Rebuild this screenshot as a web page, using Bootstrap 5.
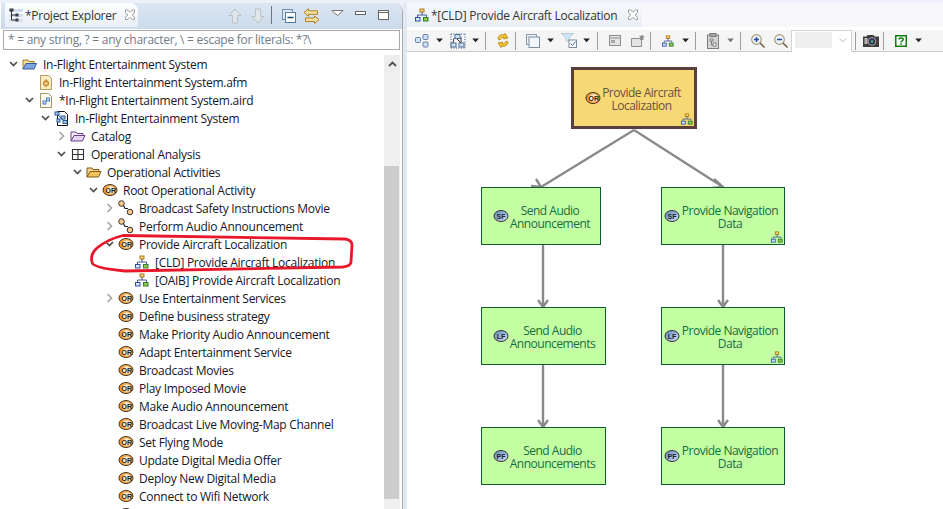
<!doctype html>
<html lang="en">
<head>
<meta charset="utf-8">
<title>Provide Aircraft Localization</title>
<link href="https://cdn.jsdelivr.net/npm/bootstrap@5.3.0/dist/css/bootstrap.min.css" rel="stylesheet">
<style>
html,body{height:509px;overflow:hidden;background:#eef0fa}
body{font-family:"Open Sans","Noto Sans",sans-serif;font-size:12px;line-height:18px;color:#16161f;letter-spacing:-.27px}
.flex-none{flex:none}
.ide-root{width:943px;height:509px;padding-top:3px}
.left-pane{width:403px;height:506px;padding-left:1px;background:#fff;border-right:1px solid #a9a9a9;border-top-right-radius:9px}
.left-head{height:26px;padding-left:4px;background:linear-gradient(#dbe6f2,#cbdaea);border-top-right-radius:9px}
.view-tab{width:133px;height:24px;padding-left:4px;background:linear-gradient(#fff,#e8eef6);border-top-right-radius:8px;color:#333}
.view-ico{margin-right:2px}
.view-tab .tab-x{margin-left:8px}
.view-tab span,.editor-tab span,.tree-row span:not(.tw){padding-top:2px}
.head-actions{padding:5px 13px 0 0}
.head-actions svg{display:block}
.g6{margin-left:6px}.g7{margin-left:7px}.g9{margin-left:9px}.g10{margin-left:10px}.g11{margin-left:11px}.g12{margin-left:12px}
.up2{margin-top:-2px}.dn1{margin-top:1px}.dn2{margin-top:2px}.dn3{margin-top:3px}
.filter-box{height:20px;margin:1px 2px 0 2px;border:1px solid #a8a8a8;background:#fff;color:#6f7c88;padding-left:4px;line-height:17px;white-space:nowrap}
.tree-zone{height:454px;margin-top:5px;overflow:hidden}
.tree-list{flex:1;overflow:hidden;margin:0;list-style:none}
.tree-row{height:18px;white-space:nowrap}
.tw{width:17px;height:18px;flex:none}
.tico{width:16px;height:18px;flex:none;margin-right:5px}
.lv0{padding-left:4px}.lv1{padding-left:20px}.lv2{padding-left:36px}.lv3{padding-left:52px}
.lv4{padding-left:68px}.lv5{padding-left:84px}.lv6{padding-left:100px}.lv7{padding-left:116px}
.v-scroll{width:16px;margin-right:2px;background:#f0f0f0}
.scroll-up{height:17px;background:#ededed}
.scroll-gap{height:94px}
.scroll-thumb{height:333px;background:#cdcdcd;margin-right:1px}
.right-pane{width:540px;height:506px;border-left:4px solid #e3e8f6;background:#fff}
.editor-head{height:24px;background:#f8f8fc}
.editor-tab{width:235px;height:24px;padding-left:8px;background:linear-gradient(#f5f8fb,#e9eff6);border-top-right-radius:9px;color:#333}
.editor-ico{margin-right:2px}
.editor-tab .tab-x{margin-left:10px}
.toolbar-gap{height:3px;background:#fff}
.tool-strip{height:22px;background:#f5f5f5;border-bottom:1px solid #c9c9c9;padding-left:3px}
.tcell{width:23px;height:21px;flex:none}
.tcell.slim{width:20px}
.dcell{width:13px;height:21px;flex:none}
.tsep{width:1px;height:18px;background:#9d9d9d;flex:none;margin:0 5px 0 3px}
.tsep.near{margin-left:1px}
.tsep.mid{margin-left:2px}
.tsep.wide{margin-left:4px}
.zoom-combo{width:61px;height:22px;margin-left:-1px;margin-right:2px;padding:2px 4px 4px 3px;border:1px solid #d2d2d2;border-bottom:0;background:#fff;flex:none}
.zoom-field{width:39px;height:16px;background:#efefef}
.zoom-caret{margin-left:7px}
.canvas-area{height:457px;position:relative;overflow:hidden;background:#fff}
.edge-layer{position:absolute;left:0;top:0}
.dnode{position:absolute;line-height:13px;text-align:center;letter-spacing:-.5px}
.green-node{background:#c3ffa2;border:1px solid #0b5f2d;color:#1a6b46}
.gold-node{left:164px;top:15px;width:126px;height:62px;background:#f6d975;border:3px solid #5a3f3f;color:#6e5040;padding-left:11px}
.col-a{left:74px;padding-left:11px}
.col-b{left:254px;width:124px;padding-left:2px}
.w-short{width:120px}.w-long{width:125px}
.row-1{top:135px;height:58px}.row-2{top:255px;height:58px}.row-3{top:375px;height:58px}
.nlabel{flex:1;padding-top:2px}
.col-a .nlabel{margin-right:9px}
.col-b .nlabel{margin-right:4px}
.gold-node .nlabel{margin-right:12px}
.node-badge{position:absolute;right:1px;bottom:1px}
.red-mark{position:absolute;left:0;top:0;pointer-events:none}
</style>
</head>
<body>
<svg width="0" height="0" class="position-absolute">
<defs>
<linearGradient id="gOr" x1="0" x2="1" y1="0" y2="0"><stop offset="0" stop-color="#f58a1e"/><stop offset=".5" stop-color="#fbb45a"/><stop offset="1" stop-color="#f99a30"/></linearGradient>
<linearGradient id="gBl" x1="0" x2="1" y1="0" y2="1"><stop offset="0" stop-color="#5f86bb"/><stop offset="1" stop-color="#d5e2f3"/></linearGradient>
<symbol id="i-or" viewBox="0 0 16 18"><ellipse cx="8" cy="9" rx="7" ry="5.500" fill="url(#gOr)" stroke="#3f3626"/><ellipse cx="8.800" cy="9" rx="4.300" ry="3.500" fill="#fff0d6"/><text x="8.800" y="11.500" text-anchor="middle" font-family="Liberation Sans,sans-serif" font-size="7" font-weight="700" fill="#222" letter-spacing="0">OR</text></symbol>
<symbol id="i-sf" viewBox="0 0 16 18"><ellipse cx="8" cy="9" rx="7" ry="5.500" fill="url(#gBl)" stroke="#333"/><text x="8" y="11.500" text-anchor="middle" font-family="Liberation Sans,sans-serif" font-size="7" font-weight="700" fill="#1d2430" letter-spacing="0">SF</text></symbol>
<symbol id="i-lf" viewBox="0 0 16 18"><ellipse cx="8" cy="9" rx="7" ry="5.500" fill="url(#gBl)" stroke="#333"/><text x="8" y="11.500" text-anchor="middle" font-family="Liberation Sans,sans-serif" font-size="7" font-weight="700" fill="#1d2430" letter-spacing="0">LF</text></symbol>
<symbol id="i-pf" viewBox="0 0 16 18"><ellipse cx="8" cy="9" rx="7" ry="5.500" fill="url(#gBl)" stroke="#333"/><text x="8" y="11.500" text-anchor="middle" font-family="Liberation Sans,sans-serif" font-size="7" font-weight="700" fill="#1d2430" letter-spacing="0">PF</text></symbol>
<symbol id="i-open" viewBox="0 0 9 18"><path d="M1 7l3.500 3.500L8 7" fill="none" stroke="#4d4d4d" stroke-width="1.700"/></symbol>
<symbol id="i-closed" viewBox="0 0 9 18"><path d="M2.500 5l4 4-4 4" fill="none" stroke="#a8a8a8" stroke-width="1.700"/></symbol>
<symbol id="i-diagram" viewBox="0 0 14 14"><rect x="5" y="1" width="4" height="3" fill="#f6d27a" stroke="#b07a12"/><path d="M7 4v3M2.500 9V7h9v2" fill="none" stroke="#44598f"/><rect x=".5" y="9.500" width="4.500" height="3.500" fill="#dbe6f7" stroke="#2c50a8"/><rect x="8.500" y="9.500" width="4.500" height="3.500" fill="#93c94d" stroke="#2f7d2f"/></symbol>
<symbol id="i-close" viewBox="0 0 12 12"><path d="M1.500 1h2.300L6 3.300 8.200 1h2.300v2.300L8.300 6l2.200 2.300v2.200H8.200L6 8.300 3.800 10.500H1.500V8.300L3.700 6 1.500 3.300z" fill="#fff" stroke="#9a9a9a"/></symbol>
<symbol id="i-caret" viewBox="0 0 9 6"><path d="M0 .5h8L4 5z" fill="#222"/></symbol>
<symbol id="i-caretg" viewBox="0 0 9 6"><path d="M0 .5h8L4 5z" fill="#777"/></symbol>
<symbol id="i-afolder" viewBox="0 0 16 18"><path d="M1 14V5h5l1 1.500h5V9" fill="#f7dc95" stroke="#a37a25"/><path d="M1 14l3-5.500h10.500L12 14z" fill="#7ea6dc" stroke="#2e5a9c"/></symbol>
<symbol id="i-pfolder" viewBox="0 0 16 18"><path d="M1 14V5h5l1 1.500h6V9" fill="#f5eefa" stroke="#6b3f84"/><path d="M1 14l3-5.500h11L12.500 14z" fill="#e4d4ee" stroke="#6b3f84"/></symbol>
<symbol id="i-ofolder" viewBox="0 0 16 18"><path d="M1 14V5h5l1 1.500h6V9" fill="#f8d58a" stroke="#7c5a1c"/><path d="M1 14l3-5.500h11L12.500 14z" fill="#f6c25c" stroke="#7c5a1c"/></symbol>
<symbol id="i-grid" viewBox="0 0 16 18"><path d="M2.500 4.500h11v10h-11zM8 4.500v10M2.500 9.500h11" fill="none" stroke="#333" stroke-width="1.100"/></symbol>
<symbol id="i-afm" viewBox="0 0 16 18"><path d="M2.500 2.500h8l3 3v11h-11z" fill="#f8ecc8" stroke="#b79a5c"/><path d="M5 9l3-3 3 3v3l-3 2-3-2z" fill="#c98f35"/><path d="M6.500 9.500h3v2h-3z" fill="#f9e5b0"/></symbol>
<symbol id="i-aird" viewBox="0 0 16 18"><path d="M2.500 2.500h8l3 3v11h-11z" fill="#fdfaf0" stroke="#a2936b"/><rect x="5" y="10" width="3" height="3" fill="#cfe0f5" stroke="#4d7dbb"/><rect x="8.500" y="7" width="3" height="3" fill="#cfe0f5" stroke="#4d7dbb"/></symbol>
<symbol id="i-model" viewBox="0 0 16 18"><path d="M3.500 2.500h7l3 3v11h-10z" fill="#fff" stroke="#111"/><path d="M3 5l8 8" stroke="#355f9b"/><rect x="1" y="3" width="4" height="3" fill="#a9c4e6" stroke="#2b5a9a"/><rect x="7" y="7" width="4" height="3" fill="#a9c4e6" stroke="#2b5a9a"/><rect x="9" y="11.500" width="4" height="3" fill="#a9c4e6" stroke="#2b5a9a"/><rect x="3" y="10" width="3" height="3" fill="#a9c4e6" stroke="#2b5a9a"/></symbol>
<symbol id="i-func" viewBox="0 0 16 18"><circle cx="3.500" cy="4.500" r="2.800" fill="#f8c98a" stroke="#333"/><circle cx="12" cy="13" r="2.800" fill="#f8c98a" stroke="#333"/><path d="M5.500 6.500l1.500 3h3" fill="none" stroke="#222" stroke-width="1.200"/></symbol>
</defs>
</svg>

<div class="ide-root d-flex">
  <section class="left-pane d-flex flex-column flex-none">
    <div class="left-head d-flex align-items-start">
      <div class="view-tab d-flex align-items-center text-nowrap">
        <svg width="14" height="16" viewBox="0 0 14 16" class="view-ico"><path d="M0 2h14v3H0zM0 7h14v3H0zM0 12h14v3H0z" fill="#d3e0ee"/><path d="M2.500 3v10M2.500 8h5M2.500 13h5" stroke="#333" fill="none"/><path d="M.5 1.500h4v3h-4zM6.500 6.500h3v3h-3zM6.500 11.500h3v3h-3z" fill="#3a3f46"/></svg>
        <span>*Project Explorer</span>
        <svg class="tab-x flex-none" width="12" height="12"><use href="#i-close"/></svg>
      </div>
      <div class="head-actions ms-auto d-flex align-items-start">
        <svg width="14" height="16" viewBox="0 0 14 16"><path d="M7 1l6 6.500H9.500V15h-5V7.500H1z" fill="#dfe6e8" stroke="#b9c2c4"/></svg>
        <svg width="14" height="16" class="g9" viewBox="0 0 14 16"><path d="M7 15l6-6.500H9.500V1h-5v7.500H1z" fill="#dfe6e8" stroke="#b9c2c4"/></svg>
        <svg width="1" height="18" class="g6 up2"><rect width="1" height="18" fill="#6b7680"/></svg>
        <svg width="14" height="14" class="g10 dn1" viewBox="0 0 14 14"><rect x=".5" y=".5" width="10" height="10" fill="#dbe8f5" stroke="#6f90ad"/><rect x="3.500" y="3.500" width="10" height="10" fill="#fff" stroke="#4f7da3"/><path d="M5.500 8.500h6" stroke="#17446e" stroke-width="1.500"/></svg>
        <svg width="17" height="16" class="g7" viewBox="0 0 17 16"><path d="M1 4.500L5.500.8v2h9v3.500h-9v2z" fill="#f5e3a6" stroke="#b5821d"/><path d="M16 11.500L11.500 8v2h-9v3.500h9v2z" fill="#f5e3a6" stroke="#b5821d"/></svg>
        <svg width="13" height="6" class="g11 dn2" viewBox="0 0 13 6"><path d="M.8.5h11.400L6.500 5.500z" fill="#fff" stroke="#777"/></svg>
        <svg width="11" height="4" class="g11 dn3" viewBox="0 0 11 4"><rect x=".5" y=".5" width="10" height="3" fill="#fff" stroke="#666"/></svg>
        <svg width="11" height="10" class="g12 dn2" viewBox="0 0 11 10"><rect x=".5" y=".5" width="10" height="9" fill="#fff" stroke="#666"/><path d="M0 2.500h11" stroke="#666"/></svg>
      </div>
    </div>
    <div class="filter-box">* = any string, ? = any character, \ = escape for literals: *?\</div>
    <div class="tree-zone d-flex">
      <ul class="tree-list ps-0">
        <li class="tree-row lv0 d-flex align-items-center"><svg class="tw" viewBox="0 0 17 18"><use href="#i-open" x="4" width="9" height="18"/></svg><svg class="tico"><use href="#i-afolder"/></svg><span>In-Flight Entertainment System</span></li>
        <li class="tree-row lv1 d-flex align-items-center"><span class="tw"></span><svg class="tico"><use href="#i-afm"/></svg><span>In-Flight Entertainment System.afm</span></li>
        <li class="tree-row lv1 d-flex align-items-center"><svg class="tw" viewBox="0 0 17 18"><use href="#i-open" x="4" width="9" height="18"/></svg><svg class="tico"><use href="#i-aird"/></svg><span>*In-Flight Entertainment System.aird</span></li>
        <li class="tree-row lv2 d-flex align-items-center"><svg class="tw" viewBox="0 0 17 18"><use href="#i-open" x="4" width="9" height="18"/></svg><svg class="tico"><use href="#i-model"/></svg><span>In-Flight Entertainment System</span></li>
        <li class="tree-row lv3 d-flex align-items-center"><svg class="tw" viewBox="0 0 17 18"><use href="#i-closed" x="4" width="9" height="18"/></svg><svg class="tico"><use href="#i-pfolder"/></svg><span>Catalog</span></li>
        <li class="tree-row lv3 d-flex align-items-center"><svg class="tw" viewBox="0 0 17 18"><use href="#i-open" x="4" width="9" height="18"/></svg><svg class="tico"><use href="#i-grid"/></svg><span>Operational Analysis</span></li>
        <li class="tree-row lv4 d-flex align-items-center"><svg class="tw" viewBox="0 0 17 18"><use href="#i-open" x="4" width="9" height="18"/></svg><svg class="tico"><use href="#i-ofolder"/></svg><span>Operational Activities</span></li>
        <li class="tree-row lv5 d-flex align-items-center"><svg class="tw" viewBox="0 0 17 18"><use href="#i-open" x="4" width="9" height="18"/></svg><svg class="tico"><use href="#i-or"/></svg><span>Root Operational Activity</span></li>
        <li class="tree-row lv6 d-flex align-items-center"><svg class="tw" viewBox="0 0 17 18"><use href="#i-closed" x="4" width="9" height="18"/></svg><svg class="tico"><use href="#i-func"/></svg><span>Broadcast Safety Instructions Movie</span></li>
        <li class="tree-row lv6 d-flex align-items-center"><svg class="tw" viewBox="0 0 17 18"><use href="#i-closed" x="4" width="9" height="18"/></svg><svg class="tico"><use href="#i-func"/></svg><span>Perform Audio Announcement</span></li>
        <li class="tree-row lv6 d-flex align-items-center"><svg class="tw" viewBox="0 0 17 18"><use href="#i-open" x="4" width="9" height="18"/></svg><svg class="tico"><use href="#i-or"/></svg><span>Provide Aircraft Localization</span></li>
        <li class="tree-row lv7 d-flex align-items-center"><span class="tw"></span><svg class="tico" viewBox="0 0 16 18"><use href="#i-diagram" x="1" y="2" width="14" height="14"/></svg><span>[CLD] Provide Aircraft Localization</span></li>
        <li class="tree-row lv7 d-flex align-items-center"><span class="tw"></span><svg class="tico" viewBox="0 0 16 18"><use href="#i-diagram" x="1" y="2" width="14" height="14"/></svg><span>[OAIB] Provide Aircraft Localization</span></li>
        <li class="tree-row lv6 d-flex align-items-center"><svg class="tw" viewBox="0 0 17 18"><use href="#i-closed" x="4" width="9" height="18"/></svg><svg class="tico"><use href="#i-or"/></svg><span>Use Entertainment Services</span></li>
        <li class="tree-row lv6 d-flex align-items-center"><span class="tw"></span><svg class="tico"><use href="#i-or"/></svg><span>Define business strategy</span></li>
        <li class="tree-row lv6 d-flex align-items-center"><span class="tw"></span><svg class="tico"><use href="#i-or"/></svg><span>Make Priority Audio Announcement</span></li>
        <li class="tree-row lv6 d-flex align-items-center"><span class="tw"></span><svg class="tico"><use href="#i-or"/></svg><span>Adapt Entertainment Service</span></li>
        <li class="tree-row lv6 d-flex align-items-center"><span class="tw"></span><svg class="tico"><use href="#i-or"/></svg><span>Broadcast Movies</span></li>
        <li class="tree-row lv6 d-flex align-items-center"><span class="tw"></span><svg class="tico"><use href="#i-or"/></svg><span>Play Imposed Movie</span></li>
        <li class="tree-row lv6 d-flex align-items-center"><span class="tw"></span><svg class="tico"><use href="#i-or"/></svg><span>Make Audio Announcement</span></li>
        <li class="tree-row lv6 d-flex align-items-center"><span class="tw"></span><svg class="tico"><use href="#i-or"/></svg><span>Broadcast Live Moving-Map Channel</span></li>
        <li class="tree-row lv6 d-flex align-items-center"><span class="tw"></span><svg class="tico"><use href="#i-or"/></svg><span>Set Flying Mode</span></li>
        <li class="tree-row lv6 d-flex align-items-center"><span class="tw"></span><svg class="tico"><use href="#i-or"/></svg><span>Update Digital Media Offer</span></li>
        <li class="tree-row lv6 d-flex align-items-center"><span class="tw"></span><svg class="tico"><use href="#i-or"/></svg><span>Deploy New Digital Media</span></li>
        <li class="tree-row lv6 d-flex align-items-center"><span class="tw"></span><svg class="tico"><use href="#i-or"/></svg><span>Connect to Wifi Network</span></li>
        <li class="tree-row lv6 d-flex align-items-center"><span class="tw"></span><svg class="tico"><use href="#i-or"/></svg></li>
      </ul>
      <div class="v-scroll d-flex flex-column flex-none">
        <div class="scroll-up d-flex align-items-center justify-content-center"><svg width="9" height="6" viewBox="0 0 9 6"><path d="M1 5l3.500-3.500L8 5" fill="none" stroke="#505050" stroke-width="1.800"/></svg></div>
        <div class="scroll-gap"></div>
        <div class="scroll-thumb"></div>
      </div>
    </div>
  </section>

  <section class="right-pane d-flex flex-column flex-none">
    <div class="editor-head d-flex">
      <div class="editor-tab d-flex align-items-center text-nowrap">
        <svg width="14" height="14" class="editor-ico flex-none"><use href="#i-diagram"/></svg>
        <span>*[CLD] Provide Aircraft Localization</span>
        <svg class="tab-x flex-none" width="12" height="12"><use href="#i-close"/></svg>
      </div>
    </div>
    <div class="toolbar-gap"></div>
    <div class="tool-strip d-flex align-items-center">
      <span class="tcell d-flex align-items-center justify-content-center"><svg width="14" height="14" viewBox="0 0 14 14"><rect x=".5" y="3.500" width="5" height="5" rx="1" fill="#cfe0f3" stroke="#5f83ad"/><rect x="8" y=".5" width="5" height="5" rx="1" fill="#cfe0f3" stroke="#5f83ad"/><rect x="8" y="8" width="5" height="5" rx="1" fill="#cfe0f3" stroke="#5f83ad"/></svg></span>
      <span class="dcell d-flex align-items-center justify-content-center"><svg width="8" height="5"><use href="#i-caret"/></svg></span>
      <span class="tcell d-flex align-items-center justify-content-center"><svg width="16" height="16" viewBox="0 0 16 16"><path d="M1 1h14M1 1v14M15 1v14M1 15h14" fill="none" stroke="#33547e" stroke-dasharray="1 1.500"/><path d="M5 4l6 6M4 5L3 10M11 4v6" stroke="#333"/><rect x="5" y="1.500" width="5" height="4" fill="#cfe0f3" stroke="#4f7199"/><rect x="1" y="10" width="5" height="4" fill="#cfe0f3" stroke="#4f7199"/><rect x="9" y="10" width="5" height="4" fill="#cfe0f3" stroke="#4f7199"/></svg></span>
      <span class="dcell d-flex align-items-center justify-content-center"><svg width="8" height="5"><use href="#i-caret"/></svg></span>
      <span class="tsep"></span>
      <span class="tcell d-flex align-items-center justify-content-center"><svg width="14" height="15" viewBox="0 0 14 15"><path d="M2 6c0-3 3-5 6-4l1-1.500L12 5 7.500 6 8 4.500C6 4 4.500 5 4 7z" fill="#f4c430" stroke="#b57d10" stroke-width=".8"/><path d="M12 9c0 3-3 5-6 4l-1 1.500L2 10l4.500-1L6 10.500c2 .5 3.500-.5 4-2.500z" fill="#f4c430" stroke="#b57d10" stroke-width=".8"/></svg></span>
      <span class="tsep near"></span>
      <span class="tcell d-flex align-items-center justify-content-center"><svg width="14" height="14" viewBox="0 0 14 14"><rect x=".5" y=".5" width="10" height="10" fill="#e8eef5" stroke="#8c9aab"/><rect x="3" y="3" width="10.500" height="10.500" fill="#f2f6fb" stroke="#7c8da2"/></svg></span>
      <span class="dcell d-flex align-items-center justify-content-center"><svg width="8" height="5"><use href="#i-caret"/></svg></span>
      <span class="tcell d-flex align-items-center justify-content-center"><svg width="16" height="15" viewBox="0 0 16 15"><path d="M.5.5h12L8 5v3H5V5z" fill="#cfe6f3" stroke="#b4cbd8"/><rect x="8" y="7" width="7.500" height="7.500" fill="#fff" stroke="#7c8da2"/><path d="M9.500 10.500l2 2 3-4" fill="none" stroke="#4f7199"/></svg></span>
      <span class="dcell d-flex align-items-center justify-content-center"><svg width="8" height="5"><use href="#i-caret"/></svg></span>
      <span class="tsep wide"></span>
      <span class="tcell d-flex align-items-center justify-content-center"><svg width="12" height="11" viewBox="0 0 12 11"><rect x=".5" y=".5" width="11" height="10" fill="#e4e4e4" stroke="#8f8f8f"/><path d="M0 3h12" stroke="#8f8f8f"/><rect x="2" y="5" width="4" height="3" fill="#a8a8a8"/></svg></span>
      <span class="tcell d-flex align-items-center justify-content-center"><svg width="14" height="12" viewBox="0 0 14 12"><path d="M.5 3.500h10v8H.5z" fill="#e4e4e4" stroke="#8f8f8f"/><path d="M9 5V2h-1.500L11 0l3 2h-1.500v3z" fill="#8f8f8f"/></svg></span>
      <span class="tsep near"></span>
      <span class="tcell d-flex align-items-center justify-content-center"><svg width="12" height="12"><use href="#i-diagram"/></svg></span>
      <span class="dcell d-flex align-items-center justify-content-center"><svg width="8" height="5"><use href="#i-caret"/></svg></span>
      <span class="tsep"></span>
      <span class="tcell d-flex align-items-center justify-content-center"><svg width="12" height="16" viewBox="0 0 12 16"><rect x=".5" y="2" width="11" height="13.500" fill="#d4d4d4" stroke="#7d7d7d"/><rect x="3" y=".5" width="6" height="3" fill="#aaa" stroke="#777"/><path d="M3 6h3v2H3zM6 10h3v3H6zM4.500 8v4H6" fill="#fff" stroke="#666" stroke-width=".8"/></svg></span>
      <span class="dcell d-flex align-items-center justify-content-center"><svg width="8" height="5"><use href="#i-caretg"/></svg></span>
      <span class="tsep"></span>
      <span class="tcell d-flex align-items-center justify-content-center"><svg width="14" height="14" viewBox="0 0 14 14"><circle cx="5.500" cy="5.500" r="4.800" fill="#eef4fb" stroke="#a89a78" stroke-width="1.200"/><path d="M3 5.500h5M5.500 3v5" stroke="#23479c" stroke-width="1.500"/><path d="M9 9l4.500 4.500" stroke="#6b5a3b" stroke-width="1.500"/></svg></span>
      <span class="tcell d-flex align-items-center justify-content-center"><svg width="14" height="14" viewBox="0 0 14 14"><circle cx="5.500" cy="5.500" r="4.800" fill="#eef4fb" stroke="#a89a78" stroke-width="1.200"/><path d="M3 5.500h5" stroke="#23479c" stroke-width="1.500"/><path d="M9 9l4.500 4.500" stroke="#6b5a3b" stroke-width="1.500"/></svg></span>
      <span class="zoom-combo d-flex align-items-center"><span class="zoom-field"></span><svg class="zoom-caret" width="8" height="5" viewBox="0 0 8 5"><path d="M.5.5L4 4 7.500.5" fill="none" stroke="#b5b5b5"/></svg></span>
      <span class="tsep near"></span>
      <span class="tcell slim d-flex align-items-center justify-content-center"><svg width="16" height="13" viewBox="0 0 16 13"><path d="M0 2.500h3.500L4.500 1h6l1 1.500H16V13H0z" fill="#3e3e3e"/><circle cx="9" cy="7.500" r="3.800" fill="#2b2b55" stroke="#aaa"/><circle cx="9" cy="7.500" r="1.500" fill="#4fa071"/><rect x="1.500" y="4" width="3" height="6" fill="#b9b9b9"/></svg></span>
      <span class="tsep mid"></span>
      <span class="tcell d-flex align-items-center justify-content-center"><svg width="12" height="12" viewBox="0 0 12 12"><rect x=".75" y=".75" width="10.500" height="10.500" fill="#fff" stroke="#0a7d0a" stroke-width="1.500"/><path d="M4 4.500c0-2 4.200-2 4.200 0 0 1.500-2.200 1.500-2.200 3M6 8.300v1.500" fill="none" stroke="#0a7d0a" stroke-width="1.500"/></svg></span>
      <span class="dcell d-flex align-items-center justify-content-center"><svg width="8" height="5"><use href="#i-caret"/></svg></span>
    </div>
    <div class="canvas-area">
      <svg class="edge-layer" width="536" height="457" viewBox="407 52 536 457">
        <g fill="none" stroke="#8a8a8a" stroke-width="2.400">
          <path d="M634 130L541 187M531 186l10 1 -5-8"/>
          <path d="M634 130L723 187M714 179l9 8-11 1"/>
          <path d="M543 245v62M538 300l5 7 5-7"/>
          <path d="M723 245v62M718 300l5 7 5-7"/>
          <path d="M543 365v62M538 420l5 7 5-7"/>
          <path d="M723 365v62M718 420l5 7 5-7"/>
        </g>
      </svg>
      <div class="dnode gold-node d-flex align-items-center">
        <svg width="16" height="18" class="flex-none"><use href="#i-or"/></svg><span class="nlabel">Provide Aircraft Localization</span>
        <svg class="node-badge" width="12" height="12"><use href="#i-diagram"/></svg>
      </div>
      <div class="dnode green-node col-a w-short row-1 d-flex align-items-center"><svg width="16" height="18" class="flex-none"><use href="#i-sf"/></svg><span class="nlabel">Send Audio Announcement</span></div>
      <div class="dnode green-node col-b row-1 d-flex align-items-center"><svg width="16" height="18" class="flex-none"><use href="#i-sf"/></svg><span class="nlabel">Provide Navigation Data</span><svg class="node-badge" width="12" height="12"><use href="#i-diagram"/></svg></div>
      <div class="dnode green-node col-a w-long row-2 d-flex align-items-center"><svg width="16" height="18" class="flex-none"><use href="#i-lf"/></svg><span class="nlabel">Send Audio Announcements</span></div>
      <div class="dnode green-node col-b row-2 d-flex align-items-center"><svg width="16" height="18" class="flex-none"><use href="#i-lf"/></svg><span class="nlabel">Provide Navigation Data</span><svg class="node-badge" width="12" height="12"><use href="#i-diagram"/></svg></div>
      <div class="dnode green-node col-a w-long row-3 d-flex align-items-center"><svg width="16" height="18" class="flex-none"><use href="#i-pf"/></svg><span class="nlabel">Send Audio Announcements</span></div>
      <div class="dnode green-node col-b row-3 d-flex align-items-center"><svg width="16" height="18" class="flex-none"><use href="#i-pf"/></svg><span class="nlabel">Provide Navigation Data</span></div>
    </div>
  </section>
</div>
<svg class="red-mark" width="943" height="509"><path d="M123 235.500L345 239Q352 240 352 245L351 262Q351 266 343 267L125 271Q92 268 92 262Q90 254 97 248Q108 239 123 235.500Z" fill="none" stroke="#e8182a" stroke-width="2.800"/></svg>
</body>
</html>
